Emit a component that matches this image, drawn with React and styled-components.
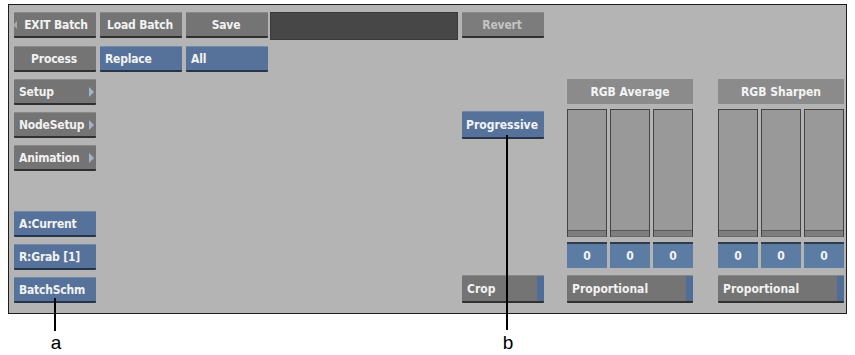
import React from 'react'
import styled, { createGlobalStyle, css } from 'styled-components'

const GlobalStyle = createGlobalStyle`
  html, body {
    margin: 0;
    padding: 0;
    background: #ffffff;
  }
`

const narrow = `"Liberation Sans Narrow", "DejaVu Sans Condensed", "Liberation Sans", sans-serif`
const rounded = `"DejaVu Sans Condensed", "DejaVu Sans", sans-serif`

const Stage = styled.div`
  position: relative;
  width: 855px;
  height: 355px;
  padding: 4px 0 0 8px;
  box-sizing: border-box;
`

const Panel = styled.div`
  width: 839px;
  height: 310px;
  box-sizing: border-box;
  border: 1px solid #1e1e1e;
  background: #b4b4b4;
  padding: 7px 2px 0 5px;
  display: flex;
  flex-direction: column;
`

const Row = styled.div`
  display: flex;
  align-items: flex-start;
  gap: 4px;
  margin-top: ${p => p.$top || 0}px;
`

const Button = styled.div`
  width: ${p => p.$w || 82}px;
  height: ${p => p.$h || 26}px;
  box-sizing: border-box;
  display: flex;
  align-items: center;
  gap: 3px;
  padding: 0 ${p => (p.$strip ? 0 : 4)}px 0 ${p => (p.$align === 'center' ? 2 : 5)}px;
  font-family: ${p => (p.$font === 'round' ? rounded : narrow)};
  font-weight: bold;
  font-size: 12px;
  letter-spacing: ${p => (p.$font === 'round' ? 0 : -0.2)}px;
  color: #f2f2f2;
  white-space: nowrap;
  overflow: hidden;
  border-radius: 1px;
  ${p =>
    p.$blue
      ? css`
          background: #56729a;
          border-top: 1px solid #7189ab;
          border-bottom: 2px solid #27354a;
        `
      : css`
          background: #747474;
          border-top: 1px solid #888888;
          border-bottom: 2px solid #303030;
        `}
  ${p =>
    p.$dim &&
    css`
      background: #7c7c7c;
      color: #c4c4c4;
    `}
`

const Label = styled.span`
  flex: 1;
  text-align: ${p => p.$align || 'left'};
`

const ArrowRight = styled.span`
  width: 0;
  height: 0;
  border-top: 5px solid transparent;
  border-bottom: 5px solid transparent;
  border-left: 5px solid #a3b3cb;
  margin-right: -2px;
`

const ArrowLeft = styled.span`
  width: 0;
  height: 0;
  border-top: 4px solid transparent;
  border-bottom: 4px solid transparent;
  border-right: 4px solid #a8a8a8;
  margin-left: -3px;
`

const Strip = styled.span`
  width: 7px;
  align-self: stretch;
  background: #4f6d98;
`

const Field = styled.div`
  width: 188px;
  height: 28px;
  margin-left: -2px;
  background: #474747;
  border: 1px solid #3a3a3a;
  box-sizing: border-box;
`

const Body = styled.div`
  display: flex;
  margin-top: 7px;
  height: 224px;
`

const LeftCol = styled.div`
  display: flex;
  flex-direction: column;
  gap: 7px;
  width: 82px;
`

const Spacer = styled.div`
  height: 26px;
`

const MidCol = styled.div`
  margin-left: auto;
  margin-right: 23px;
  padding-top: 32px;
  display: flex;
  flex-direction: column;
  justify-content: space-between;
  align-items: flex-start;
`

const Groups = styled.div`
  display: flex;
  gap: 25px;
`

const Group = styled.div`
  width: 126px;
  display: flex;
  flex-direction: column;
`

const Header = styled.div`
  height: 25px;
  background: #8b8b8b;
  display: flex;
  align-items: center;
  justify-content: center;
  font-family: ${narrow};
  font-weight: bold;
  font-size: 12px;
  color: #f4f4f4;
`

const Bars = styled.div`
  display: grid;
  grid-template-columns: repeat(3, 1fr);
  gap: 3px;
  margin-top: 5px;
  height: 128px;
`

const Bar = styled.div`
  display: flex;
  flex-direction: column;
  justify-content: flex-end;
  background: #999999;
  border: 1px solid #444444;
  border-bottom: none;
`

const BarFoot = styled.div`
  height: 5px;
  background: #7e7e7e;
  border-top: 1px solid #5a5a5a;
  border-bottom: 1px solid #6a6a6a;
`

const Values = styled.div`
  display: grid;
  grid-template-columns: repeat(3, 1fr);
  gap: 3px;
  margin-top: 5px;
`

const Value = styled.div`
  height: 26px;
  box-sizing: border-box;
  background: #5d7ca4;
  border-top: 2px solid #2f3c4d;
  display: flex;
  align-items: center;
  justify-content: center;
  font-family: ${rounded};
  font-weight: bold;
  font-size: 12px;
  color: #f4f4f4;
`

const GroupFoot = styled.div`
  margin-top: 7px;
`

const Leader = styled.div`
  position: absolute;
  left: ${p => p.$x}px;
  top: ${p => p.$top}px;
  width: 2px;
  height: ${p => p.$bottom - p.$top}px;
  background: #000;
`

const Tag = styled.div`
  position: absolute;
  left: ${p => p.$x - 10}px;
  top: 333px;
  width: 22px;
  text-align: center;
  font-family: "Liberation Sans", Arial, sans-serif;
  font-size: 19px;
  line-height: 20px;
  color: #000;
`

const GreyBtn = ({ children, align = 'left', arrow, ...rest }) => (
  <Button $align={align} {...rest}>
    {arrow === 'left' && <ArrowLeft />}
    <Label $align={align}>{children}</Label>
    {arrow === 'right' && <ArrowRight />}
  </Button>
)

const StripBtn = ({ children, w = 82 }) => (
  <Button $w={w} $h={28} $strip $font="round">
    <Label>{children}</Label>
    <Strip />
  </Button>
)

const FilterGroup = ({ title }) => (
  <Group>
    <Header>{title}</Header>
    <Bars>
      {[0, 1, 2].map(i => (
        <Bar key={i}>
          <BarFoot />
        </Bar>
      ))}
    </Bars>
    <Values>
      {[0, 1, 2].map(i => (
        <Value key={i}>0</Value>
      ))}
    </Values>
    <GroupFoot>
      <StripBtn w={126}>Proportional</StripBtn>
    </GroupFoot>
  </Group>
)

export default function App() {
  return (
    <>
      <GlobalStyle />
      <Stage>
        <Panel>
          <Row>
            <GreyBtn align="center" arrow="left">EXIT Batch</GreyBtn>
            <GreyBtn align="center">Load Batch</GreyBtn>
            <GreyBtn align="center">Save</GreyBtn>
            <Field />
            <GreyBtn align="center" $dim>Revert</GreyBtn>
          </Row>
          <Row $top={6}>
            <GreyBtn align="center">Process</GreyBtn>
            <GreyBtn $blue>Replace</GreyBtn>
            <GreyBtn $blue>All</GreyBtn>
          </Row>
          <Body>
            <LeftCol>
              <GreyBtn arrow="right">Setup</GreyBtn>
              <GreyBtn arrow="right">NodeSetup</GreyBtn>
              <GreyBtn arrow="right">Animation</GreyBtn>
              <Spacer />
              <GreyBtn $blue>A:Current</GreyBtn>
              <GreyBtn $blue>R:Grab [1]</GreyBtn>
              <GreyBtn $blue>BatchSchm</GreyBtn>
            </LeftCol>
            <MidCol>
              <GreyBtn $blue align="center" $font="round" $h={28}>Progressive</GreyBtn>
              <StripBtn>Crop</StripBtn>
            </MidCol>
            <Groups>
              <FilterGroup title="RGB Average" />
              <FilterGroup title="RGB Sharpen" />
            </Groups>
          </Body>
        </Panel>
        <Leader $x={54} $top={298} $bottom={331} />
        <Tag $x={55}>a</Tag>
        <Leader $x={506} $top={135} $bottom={330} />
        <Tag $x={507}>b</Tag>
      </Stage>
    </>
  )
}
